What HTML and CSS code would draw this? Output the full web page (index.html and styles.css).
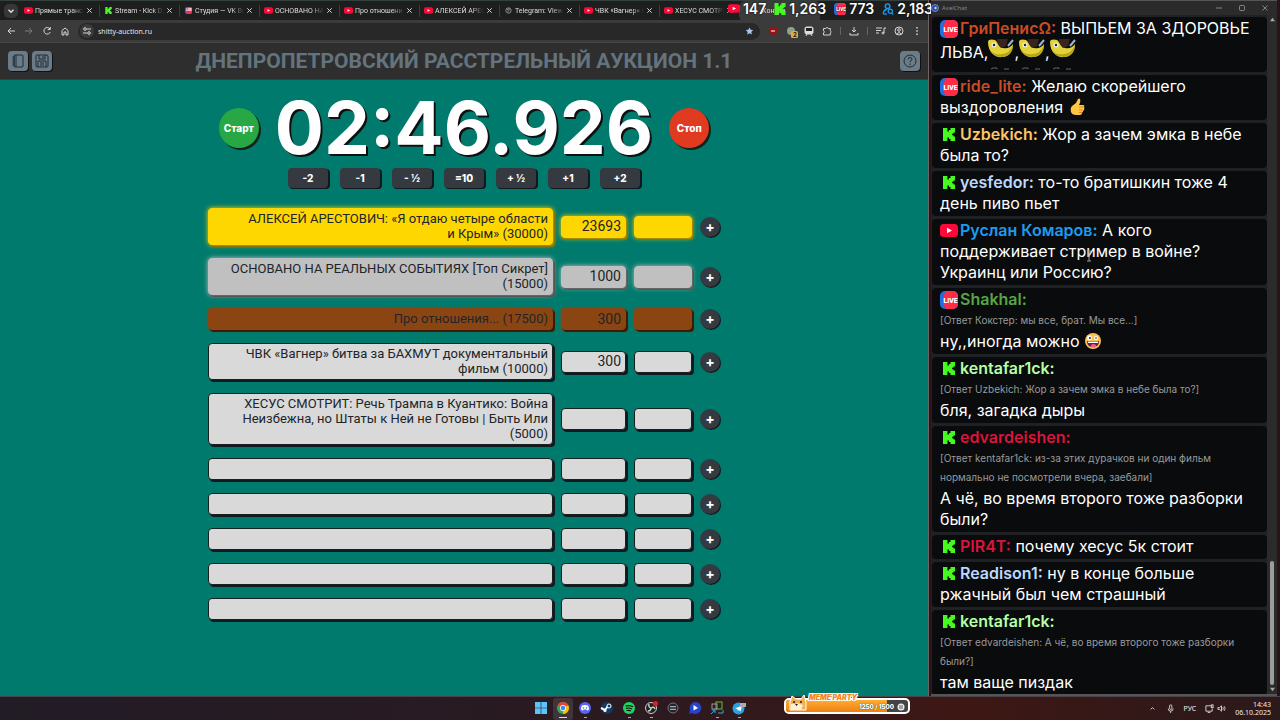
FILE: index.html
```html
<!DOCTYPE html>
<html lang="ru">
<head>
    <meta charset="UTF-8">
    <title>Аукцион</title>
    <link rel="stylesheet" href="styles.css">
</head>

<body>
    <!-- icons -->
    <svg class="sprite" aria-hidden="true">
        <symbol id="yt" viewBox="0 0 18 13"><rect width="18" height="13" rx="3.5" fill="#ff0838"/><path d="M7 3.8v5.4l5-2.7z" fill="#fff"/></symbol>
        <symbol id="kick" viewBox="0 0 12 13"><path d="M0 0h4.400v3.500H6V2h1.500V0H12v4.400h-1.500v1.300H9v1.600h1.500v1.300H12V13H7.500v-2H6V9.500H4.400V13H0z" fill="#43fb1c"/></symbol>
        <symbol id="live" viewBox="0 0 18 18"><rect width="18" height="18" rx="5" fill="#1f6fe0"/><path d="M6 0h7a5 5 0 0 1 5 5v8a5 5 0 0 1-5 5H6q-3-4-3-9t3-9z" fill="#ff2b47"/><text x="3.500" y="11.500" font-family="Roboto, sans-serif" font-size="6.800" font-weight="900" fill="#fff">LIVE</text></symbol>
        <symbol id="x" viewBox="0 0 8 8"><path d="M1.500 1.500l5 5m0-5l-5 5" fill="none" stroke="#ddd" stroke-width="1.100"/></symbol>
        <symbol id="globe" viewBox="0 0 10 10"><circle cx="5" cy="5" r="3.800" fill="none" stroke="#aaa"/><path d="M2 3l3 1-1 2 2 2M6 1l-1 2 3 2" fill="none" stroke="#aaa"/></symbol>
        <symbol id="emote" viewBox="0 0 26 31"><path d="M0 3C0 14 8 19 14 18c7 0 11-6 11-13-3 4-6 5-10 4C11 8 10 3 7 1 4 0 0 0 0 3z" fill="#e3d23a"/><path d="M1 9c3 6 8 7 13 6 5 0 9-4 11-9 0 8-5 12-11 12C8 18 3 15 1 9z" fill="#b8a41c"/><path d="M9 0h11l-2 7-5 2q-4-3-4-9z" fill="#39231f"/><circle cx="6" cy="6" r="2.500" fill="#eee"/><circle cx="6" cy="6" r="1.200" fill="#222"/><path d="M20 7l5-6" stroke="#9db6cc" stroke-width="2"/><path d="M3 30l2-1h4v1m7 0h5" fill="none" stroke="#666"/></symbol>
    </svg>

    <div class="screen">
        <div class="browser">
            <nav class="tabs">
                <button class="tab-list" aria-label="Поиск вкладок"><svg viewBox="0 0 8 8"><path d="M2 3l2 2 2-2" fill="none" stroke="#ddd" stroke-width="1.200"/></svg></button>
                <a class="tab" href="#"><svg class="fav"><use href="#yt"/></svg><span>Прямые трансл</span><svg class="x"><use href="#x"/></svg></a>
                <a class="tab" href="#"><svg class="fav"><use href="#kick"/></svg><span>Stream - Kick Da</span><svg class="x"><use href="#x"/></svg></a>
                <a class="tab" href="#"><svg class="fav"><use href="#live"/></svg><span>Студия — VK Ви</span><svg class="x"><use href="#x"/></svg></a>
                <a class="tab" href="#"><svg class="fav"><use href="#yt"/></svg><span>ОСНОВАНО НА</span><svg class="x"><use href="#x"/></svg></a>
                <a class="tab" href="#"><svg class="fav"><use href="#yt"/></svg><span>Про отношени</span><svg class="x"><use href="#x"/></svg></a>
                <a class="tab" href="#"><svg class="fav"><use href="#yt"/></svg><span>АЛЕКСЕЙ АРЕС</span><svg class="x"><use href="#x"/></svg></a>
                <a class="tab" href="#"><svg class="fav"><use href="#globe"/></svg><span>Telegram: View @</span><svg class="x"><use href="#x"/></svg></a>
                <a class="tab" href="#"><svg class="fav"><use href="#yt"/></svg><span>ЧВК «Вагнер» б</span><svg class="x"><use href="#x"/></svg></a>
                <a class="tab" href="#"><svg class="fav"><use href="#yt"/></svg><span>ХЕСУС СМОТРИ</span><svg class="x"><use href="#x"/></svg></a>
                <a class="tab active" href="#"><span>Конура</span></a>
            </nav>

            <div class="toolbar">
                <button aria-label="Назад"><svg viewBox="0 0 10 10"><path d="M9 5H2m3-3L2 5l3 3"/></svg></button>
                <button class="off" aria-label="Вперёд"><svg viewBox="0 0 10 10"><path d="M1 5h7M5 2l3 3-3 3"/></svg></button>
                <button aria-label="Обновить"><svg viewBox="0 0 10 10"><path d="M8 3a3.300 3.300 0 1 0 .3 3M8.300 1v2.500H5.700"/></svg></button>
                <button aria-label="Домой"><svg viewBox="0 0 10 10"><path d="M2 4.500L5 2l3 2.500V9H6V6H4v3H2z"/></svg></button>
                <label class="address">
                    <span class="site"><svg viewBox="0 0 10 10"><path d="M5 3h4M1 7h4"/><circle cx="3" cy="3" r="1.300"/><circle cx="7" cy="7" r="1.300"/></svg></span>
                    <input type="text" value="shitty-auction.ru" aria-label="Адрес">
                    <svg class="star" viewBox="0 0 10 10"><path d="M5 1l1.200 2.700 2.900.3L7 6l.6 3L5 7.500 2.400 9 3 6 .9 4l2.900-.3z"/></svg>
                </label>
                <button aria-label="uBlock"><svg viewBox="0 0 10 10"><path d="M5 1l4 1v3q0 3-4 4-4-1-4-4V2z" fill="#9c1010" stroke="none"/><path d="M3 5h4" stroke="#fff"/></svg></button>
                <button class="badge" aria-label="Расширение"><svg viewBox="0 0 12 12"><circle cx="5" cy="5" r="4" fill="#8fa08c" stroke="none"/><rect x="5" y="5" width="7" height="7" rx="1.500" fill="#f2a63a" stroke="none"/><text x="7" y="11" font-size="6" font-weight="700" font-family="Inter, sans-serif" fill="#222" stroke="none">2</text></svg></button>
                <button aria-label="Метро"><svg viewBox="0 0 10 10"><rect x="1" y="1" width="8" height="7" rx="1.500" fill="#ddd"/><rect x="2" y="2" width="6" height="3" fill="#222" stroke="none"/><path d="M2 10l1-2m5 2L7 8"/></svg></button>
                <button aria-label="Расширения"><svg viewBox="0 0 10 10"><path d="M1.500 2.500h2.300a1.300 1.300 0 0 1 2.500 0h2v2.300a1.300 1.300 0 0 1 0 2.200v2H1.500V7q2-1 0-2.200z"/></svg></button>
                <i></i>
                <button aria-label="Загрузки"><svg viewBox="0 0 10 10"><path d="M5 1v5M3 4l2 2 2-2M1 7v2h8V7"/></svg></button>
                <i></i>
                <button aria-label="Музыка"><svg viewBox="0 0 10 10"><path d="M0 2h6M0 4.500h5M0 7h3M8 7V2h2"/><circle cx="7" cy="7" r="1"/></svg></button>
                <button aria-label="Профиль"><svg viewBox="0 0 10 10"><circle cx="5" cy="5" r="4"/><circle cx="5" cy="4" r="1.300"/><path d="M2.500 8q2.500-3 5 0"/></svg></button>
                <button aria-label="Меню"><svg viewBox="0 0 10 10"><path d="M5 1v1.500M5 4.300v1.500M5 7.600v1.500" stroke-width="1.500"/></svg></button>
            </div>

            <header class="head">
                <div class="head-btns">
                    <button class="sq" aria-label="Журнал"><svg viewBox="0 0 14 14"><rect x="3" y="1" width="9" height="12" rx="1"/><path d="M5 1v12M1.500 3H4M1.500 5H4M1.500 7H4M1.500 9H4M1.500 11H4"/></svg></button>
                    <button class="sq" aria-label="Сохранить"><svg viewBox="0 0 14 14"><path d="M1 2q0-1 1-1h10l1 1v10q0 1-1 1H2q-1 0-1-1zM4 1v4h6V1M8 2v2M3 13V7h8v6M5 9h4M5 11h4"/></svg></button>
                </div>
                <h1>ДНЕПРОПЕТРОВСКИЙ РАССТРЕЛЬНЫЙ АУКЦИОН 1.1</h1>
                <div class="head-btns right">
                    <button class="sq" aria-label="Помощь"><svg viewBox="0 0 14 14"><circle cx="7" cy="7" r="6"/><path d="M5 5.500q0-2 2-2t2 1.800Q9 6.500 7 7.300v1M7 9.500V11"/></svg></button>
                </div>
            </header>

            <main class="auction">
                <div class="timer">
                    <button class="round start">Старт</button>
                    <time>02:46.926</time>
                    <button class="round stop">Стоп</button>
                </div>
                <div class="steps">
                    <button>-2</button>
                    <button>-1</button>
                    <button>- ½</button>
                    <button>=10</button>
                    <button>+ ½</button>
                    <button>+1</button>
                    <button>+2</button>
                </div>

                <div class="lots">
                    <div class="lot gold">
                        <textarea rows="2" aria-label="Лот 1">АЛЕКСЕЙ АРЕСТОВИЧ: «Я отдаю четыре области и&nbsp;Крым»&nbsp;(30000)</textarea>
                        <input class="sum" type="text" value="23693" aria-label="Сумма 1">
                        <input class="add" type="text" aria-label="Добавить 1">
                        <button aria-label="Плюс">+</button>
                    </div>
                    <div class="lot silver">
                        <textarea rows="2" aria-label="Лот 2">ОСНОВАНО НА РЕАЛЬНЫХ СОБЫТИЯХ [Топ Сикрет] (15000)</textarea>
                        <input class="sum" type="text" value="1000" aria-label="Сумма 2">
                        <input class="add" type="text" aria-label="Добавить 2">
                        <button aria-label="Плюс">+</button>
                    </div>
                    <div class="lot bronze">
                        <textarea rows="1" aria-label="Лот 3">Про отношения... (17500)</textarea>
                        <input class="sum" type="text" value="300" aria-label="Сумма 3">
                        <input class="add" type="text" aria-label="Добавить 3">
                        <button aria-label="Плюс">+</button>
                    </div>
                    <div class="lot">
                        <textarea rows="2" aria-label="Лот 4">ЧВК «Вагнер» битва за БАХМУТ документальный фильм&nbsp;(10000)</textarea>
                        <input class="sum" type="text" value="300" aria-label="Сумма 4">
                        <input class="add" type="text" aria-label="Добавить 4">
                        <button aria-label="Плюс">+</button>
                    </div>
                    <div class="lot">
                        <textarea rows="3" aria-label="Лот 5">ХЕСУС СМОТРИТ: Речь Трампа в Куантико: Война Неизбежна, но Штаты к Ней не Готовы | Быть Или (5000)</textarea>
                        <input class="sum" type="text" aria-label="Сумма 5">
                        <input class="add" type="text" aria-label="Добавить 5">
                        <button aria-label="Плюс">+</button>
                    </div>
                    <div class="lot">
                        <textarea rows="1" aria-label="Лот 6"></textarea>
                        <input class="sum" type="text" aria-label="Сумма 6">
                        <input class="add" type="text" aria-label="Добавить 6">
                        <button aria-label="Плюс">+</button>
                    </div>
                    <div class="lot">
                        <textarea rows="1" aria-label="Лот 7"></textarea>
                        <input class="sum" type="text" aria-label="Сумма 7">
                        <input class="add" type="text" aria-label="Добавить 7">
                        <button aria-label="Плюс">+</button>
                    </div>
                    <div class="lot">
                        <textarea rows="1" aria-label="Лот 8"></textarea>
                        <input class="sum" type="text" aria-label="Сумма 8">
                        <input class="add" type="text" aria-label="Добавить 8">
                        <button aria-label="Плюс">+</button>
                    </div>
                    <div class="lot">
                        <textarea rows="1" aria-label="Лот 9"></textarea>
                        <input class="sum" type="text" aria-label="Сумма 9">
                        <input class="add" type="text" aria-label="Добавить 9">
                        <button aria-label="Плюс">+</button>
                    </div>
                    <div class="lot">
                        <textarea rows="1" aria-label="Лот 10"></textarea>
                        <input class="sum" type="text" aria-label="Сумма 10">
                        <input class="add" type="text" aria-label="Добавить 10">
                        <button aria-label="Плюс">+</button>
                    </div>
                </div>
            </main>

            <!-- viewer counters over the tabs -->
            <div class="viewers">
                <span><svg class="v-yt"><use href="#yt"/></svg>147</span>
                <span><svg class="v-kick"><use href="#kick"/></svg>1,263</span>
                <span><svg class="v-live"><use href="#live"/></svg>773</span>
                <span><svg class="v-all" viewBox="0 0 12 13"><path d="M1 12q0-5 4-5M1 12h4" fill="none" stroke="#1b9af0" stroke-width="1.500"/><circle cx="5.500" cy="3.500" r="2.500" fill="none" stroke="#1b9af0" stroke-width="1.500"/><circle cx="8.500" cy="9" r="2.300" fill="none" stroke="#1b9af0" stroke-width="1.300"/><path d="M10 10.500l1.500 2" stroke="#1b9af0" stroke-width="1.300"/></svg>2,183</span>
            </div>
        </div>

        <aside class="chat">
            <div class="chat-title">
                <svg viewBox="0 0 8 8"><circle cx="4" cy="4" r="3.500" fill="#2544c4"/><circle cx="4.500" cy="4" r="1" fill="#fff"/></svg>
                <span>AxelChat</span>
                <button aria-label="Свернуть"><svg viewBox="0 0 8 8"><path d="M1 4h6"/></svg></button>
                <button aria-label="Развернуть"><svg viewBox="0 0 8 8"><rect x="1.500" y="1.500" width="5" height="5" rx="1"/></svg></button>
                <button aria-label="Закрыть"><svg viewBox="0 0 8 8"><path d="M1.500 1.500l5 5m0-5l-5 5"/></svg></button>
            </div>
            <div class="chat-body">
                <div class="messages">
                    <p class="msg"><svg class="live"><use href="#live"/></svg><b class="orange">ГриПенисΩ:</b> ВЫПЬЕМ ЗА ЗДОРОВЬЕ ЛЬВА,<svg class="emote"><use href="#emote"/></svg>,<svg class="emote"><use href="#emote"/></svg>,<svg class="emote"><use href="#emote"/></svg></p>
                    <p class="msg"><svg class="live"><use href="#live"/></svg><b class="orange">ride_lite:</b> Желаю скорейшего выздоровления <svg class="thumb" viewBox="0 0 16 18"><path d="M3 8l4-3 2-4q1-1 2 0 1 2-1 6h4q2 0 1 2 1 1 0 2 1 1-1 2 0 1-1 2 0 2-2 2H7q-4 0-5-3-1-4 1-6z" fill="#ffc544"/><path d="M10 9h5M10 12h4M10 14.500h3" stroke="#d98b1c"/></svg></p>
                    <p class="msg"><svg class="kick"><use href="#kick"/></svg><b class="sand">Uzbekich:</b> Жор а зачем эмка в небе была то?</p>
                    <p class="msg"><svg class="kick"><use href="#kick"/></svg><b class="ice">yesfedor:</b> то-то братишкин тоже 4 день пиво пьет</p>
                    <p class="msg"><svg class="yt"><use href="#yt"/></svg><b class="blue">Руслан Комаров:</b> А кого поддерживает стример в войне? Украинц или Россию?</p>
                    <p class="msg"><svg class="live"><use href="#live"/></svg><b class="green">Shakhal:</b><small>[Ответ Кокстер: мы все, брат. Мы все...]</small>ну,,иногда можно <svg class="smile" viewBox="0 0 18 18"><circle cx="9" cy="9" r="8" fill="#fbc25a"/><circle cx="5.500" cy="6" r="2.400" fill="#fff"/><circle cx="12" cy="6" r="2" fill="#fff"/><circle cx="6" cy="6" r="1" fill="#3a2020"/><circle cx="12" cy="6" r=".8" fill="#3a2020"/><path d="M3 9h12q0 6-6 6T3 9z" fill="#6b1e46"/><path d="M4 9.500h10v1.500H4z" fill="#fff"/><path d="M7 13q2-2 5 0v2q-3 1-5 0z" fill="#ee5b86"/></svg></p>
                    <p class="msg"><svg class="kick"><use href="#kick"/></svg><b class="mint">kentafar1ck:</b><small>[Ответ Uzbekich: Жор а зачем эмка в небе была то?]</small>бля, загадка дыры</p>
                    <p class="msg"><svg class="kick"><use href="#kick"/></svg><b class="red">edvardeishen:</b><small>[Ответ kentafar1ck: из-за этих дурачков ни один фильм нормально не посмотрели вчера, заебали]</small>А чё, во время второго тоже разборки были?</p>
                    <p class="msg"><svg class="kick"><use href="#kick"/></svg><b class="red">PIR4T:</b> почему хесус 5к стоит</p>
                    <p class="msg"><svg class="kick"><use href="#kick"/></svg><b class="ice">Readison1:</b> ну в конце больше ржачный был чем страшный</p>
                    <p class="msg"><svg class="kick"><use href="#kick"/></svg><b class="mint">kentafar1ck:</b><small>[Ответ edvardeishen: А чё, во время второго тоже разборки были?]</small>там ваще пиздак</p>
                </div>
                <div class="scroll">
                    <svg viewBox="0 0 6 6"><path d="M3 1l3 4H0z" fill="#aaa"/></svg>
                    <div class="thumb-bar"></div>
                    <svg viewBox="0 0 6 6"><path d="M3 5l3-4H0z" fill="#aaa"/></svg>
                </div>
            </div>
            <svg class="cursor" viewBox="0 0 6 12"><path d="M1 1h4M3 1v10M1 11h4" fill="none" stroke="#999"/></svg>
        </aside>
    </div>

    <footer class="taskbar">
        <div></div>
        <div class="apps">
            <button aria-label="Пуск"><svg viewBox="0 0 14 14"><path d="M1 1h5.700v5.700H1zM7.300 1H13v5.700H7.300zM1 7.300h5.700V13H1zM7.300 7.300H13V13H7.300z" fill="#5cc4fa"/></svg></button>
            <button class="run on" aria-label="Chrome"><svg viewBox="0 0 14 14"><circle cx="7" cy="7" r="6" fill="#34a853"/><path d="M7 7L1.800 4A6 6 0 0 1 12.200 4z" fill="#ea4335"/><path d="M7 7l5.200-3A6 6 0 0 1 7 13z" fill="#fbbc05"/><path d="M1.800 4h10.400L7 7z" fill="#ea4335"/><circle cx="7" cy="7" r="3" fill="#fff"/><circle cx="7" cy="7" r="2.300" fill="#4285f4"/></svg></button>
            <button class="run" aria-label="Discord"><svg viewBox="0 0 14 14"><circle cx="7" cy="7" r="6" fill="#5865f2"/><path d="M4 4.500q3-1 6 0 1 2 1 4-1 1-2 1l-.5-1h-3l-.5 1q-1 0-2-1 0-2 1-4z" fill="#fff"/><circle cx="5.500" cy="7" r=".8" fill="#5865f2"/><circle cx="8.500" cy="7" r=".8" fill="#5865f2"/></svg></button>
            <button aria-label="Steam"><svg viewBox="0 0 14 14"><circle cx="7" cy="7" r="6" fill="#133a63"/><path d="M1 7l4 2 3-4" stroke="#fff" stroke-width="2" fill="none"/><circle cx="9" cy="5" r="2" fill="#133a63" stroke="#fff"/><circle cx="5" cy="9.500" r="1.500" fill="#fff"/></svg></button>
            <button class="run" aria-label="Spotify"><svg viewBox="0 0 14 14"><circle cx="7" cy="7" r="6" fill="#1ed760"/><path d="M3.500 5q4-1 7.500.800M4 7.300q3-.8 6 .7M4.500 9.500q2.500-.6 4.500.6" fill="none" stroke="#111" stroke-width="1.200"/></svg></button>
            <button class="run" aria-label="OBS"><svg viewBox="0 0 14 14"><circle cx="7" cy="7" r="5.500" fill="#222" stroke="#ccc"/><path d="M7 7q-3-1-2-4M7 7q3-2 4 1M7 7q0 3-3 3" fill="none" stroke="#ccc" stroke-width="1.400"/><circle cx="11.500" cy="2.500" r="2.500" fill="#f01818"/></svg></button>
            <button aria-label="Приложение"><svg viewBox="0 0 14 14"><circle cx="7" cy="7" r="5" fill="#23232e" stroke="#777"/><path d="M4 5.500h6M4 8.500h6" stroke="#aaa"/><path d="M4 7h6" stroke="#667"/></svg></button>
            <button aria-label="AxelChat"><svg viewBox="0 0 14 14"><path d="M7 1a6 6 0 1 1-3 11l-3 1 1-4A6 6 0 0 1 7 1z" fill="#2845c9"/><path d="M5.500 4v5.500L10 7z" fill="#fff"/></svg></button>
            <button class="run" aria-label="Монитор"><svg viewBox="0 0 14 14"><rect x="6" y="1" width="6" height="7" fill="#1d241b" stroke="#77b43d"/><rect x="2" y="3" width="5" height="5" fill="none" stroke="#999"/><path d="M1 13l4-4M2 9h3v3M8 12h5V9" fill="none" stroke="#3ba5d8"/></svg></button>
            <button class="run" aria-label="Telegram"><svg viewBox="0 0 14 14"><circle cx="6.500" cy="7.500" r="6" fill="#2aa1df"/><path d="M3 7.500l7-3-1.300 6-2-1.500L5.500 10V8z" fill="#fff"/><rect x="8" y="2" width="6" height="4" fill="#aab"/></svg></button>
        </div>
        <div class="tray-side">
            <div class="meme">
                <div class="meme-bar"><div class="meme-fill"></div></div>
                <svg class="doge" viewBox="0 0 18 16"><path d="M1 15V7L3 1l4 3h5l3-4 2 7v8z" fill="#f2b155" stroke="#fff"/><path d="M2 9q4-1 6 1v5H2z" fill="#fff0d3"/><path d="M8 8l6 2-2 5H5q1-4 3-7z" fill="#fff0d3"/><path d="M4 7h2M11 7h2" stroke="#2b1a10" stroke-width="1.500"/><path d="M6 9h3l-1.500 2z" fill="#2b1a10"/></svg>
                <b class="meme-name">MEME PARTY</b>
                <span class="meme-num">1250 / 1500 <svg viewBox="0 0 8 8"><circle cx="4" cy="4" r="3.500" fill="#eee"/><path d="M2 3h4M2 5h4" stroke="#555"/></svg></span>
            </div>
            <div class="tray">
                <svg viewBox="0 0 10 10"><path d="M3 6l2-2 2 2"/></svg>
                <svg viewBox="0 0 10 10"><rect x="4" y="1" width="2.500" height="5" rx="1"/><path d="M2.500 5q0 3 2.700 3T8 5M5.200 8v2"/></svg>
                <span class="lang">РУС</span>
                <span class="pair"><svg viewBox="0 0 10 10"><path d="M7 2H1v6h7V5M3 9.500h3"/><rect x="7" y="1" width="2" height="3"/></svg><svg viewBox="0 0 10 10"><path d="M1 4h2l2-2v6L3 6H1zM6.500 3.500q1 1.500 0 3M8 2.500q2 2.500 0 5"/></svg></span>
                <time>14:43<br>06.10.2025</time>
            </div>
        </div>
    </footer>
</body>
</html>
```
FILE: styles.css
```css
* {
    box-sizing: border-box;
}

body {
    margin: 0;
    height: 100vh;
    display: flex;
    flex-direction: column;
    overflow: hidden;
    background: #2b1216;
    color: #fff;
    font-family: Inter, "Noto Sans", sans-serif;
}

button {
    padding: 0;
    border: 0;
    background: none;
    color: inherit;
    font-family: inherit;
}

svg {
    flex: none;
}

.sprite {
    display: none;
}

.screen {
    flex: 1;
    min-height: 0;
    display: grid;
    grid-template-columns: 1fr 348px;
    gap: 2px;
    padding-right: 1px;
}

/* browser */
.browser {
    position: relative;
    min-width: 0;
    display: flex;
    flex-direction: column;
    border-right: 1px solid #666;
    background: #007a6c;
}

.tabs {
    height: 20px;
    display: flex;
    align-items: center;
    padding-left: 4px;
    border-top: 1px solid #34403d;
    background: #1d1f1e;
}

.tab-list {
    width: 14px;
    height: 14px;
    margin-right: 2px;
    border-radius: 5px;
    background: #373737;
}

.tab-list svg {
    display: block;
    width: 10px;
    margin: 0 auto;
}

.tab {
    width: 80px;
    height: 12px;
    display: flex;
    align-items: center;
    gap: 2px;
    padding: 0 6px 0 4px;
    border-right: 1px solid #3c3c3c;
    color: #dedede;
    font: 7px/12px Roboto, sans-serif;
    text-decoration: none;
}

.tab span {
    flex: 1;
    overflow: hidden;
    white-space: nowrap;
    -webkit-mask-image: linear-gradient(90deg, #000 75%, transparent);
    mask-image: linear-gradient(90deg, #000 75%, transparent);
}

.tab .fav {
    width: 9px;
    height: 7px;
}

.tab .x {
    width: 7px;
    height: 7px;
}

.tab.active {
    height: 19px;
    padding-left: 22px;
    border: 0;
    border-radius: 5px 5px 0 0;
    background: #3b3b3b;
}

.toolbar {
    height: 23px;
    display: flex;
    align-items: center;
    gap: 8px;
    padding: 0 6px;
    border-bottom: 1px solid #474747;
    background: #3b3b3b;
}

.toolbar button {
    width: 10px;
    height: 10px;
}

.toolbar svg {
    display: block;
    width: 10px;
    height: 10px;
    fill: none;
    stroke: #d6d6d6;
}

.toolbar .badge svg {
    width: 12px;
    height: 12px;
}

.toolbar .off {
    opacity: .4;
}

.toolbar i {
    width: 1px;
    height: 8px;
    background: #666;
}

.address {
    flex: 1;
    height: 17px;
    display: flex;
    align-items: center;
    gap: 4px;
    padding: 0 6px 0 2px;
    border-radius: 9px;
    background: #282828;
}

.address .site {
    padding: 2px;
    border-radius: 50%;
    background: #3b3b3b;
}

.address input {
    flex: 1;
    padding: 0;
    border: 0;
    background: none;
    color: #e6e6e6;
    font: 7px "Noto Sans", sans-serif;
}

.address .star {
    width: 9px;
    fill: #a8c7fa;
    stroke: none;
}

.head {
    height: 37px;
    display: grid;
    grid-template-columns: 1fr auto 1fr;
    align-items: center;
    padding: 0 8px;
    border-bottom: 1px solid #1d4a44;
    background: #2e2e2e;
}

.head h1 {
    margin: 0;
    color: #64747f;
    font-family: Roboto, sans-serif;
    font-size: 21px;
    line-height: 24px;
}

.head-btns {
    display: flex;
    gap: 4px;
}

.head-btns.right {
    justify-content: flex-end;
}

.sq {
    width: 20px;
    height: 20px;
    display: grid;
    place-items: center;
    border-radius: 4px;
    background: #6c7c87;
    box-shadow: 1px 1px 0 #111;
}

.sq svg {
    width: 14px;
    height: 14px;
    fill: none;
    stroke: #1f2b38;
}

/* auction */
.auction {
    flex: 1;
    padding-top: 12px;
    background: #007a6c;
}

.timer {
    display: flex;
    justify-content: center;
    align-items: center;
    gap: 16px;
}

.timer time {
    font-size: 73px;
    font-weight: 700;
    line-height: 72px;
    text-shadow: 1px 1px 0 #111, 2px 2px 0 #111;
}

.round {
    width: 40px;
    height: 40px;
    border-radius: 50%;
    font-size: 10px;
    font-weight: 800;
    box-shadow: 1px 1px 0 #14221c, 2px 2px 0 #14221c;
}

.start {
    background: #28a745;
}

.stop {
    background: #e03a20;
}

.steps {
    display: flex;
    justify-content: center;
    gap: 12px;
    margin-top: 4px;
}

.steps button {
    width: 40px;
    height: 20px;
    border-radius: 4px;
    background: #343a40;
    font-size: 10px;
    font-weight: 800;
    box-shadow: 1px 1px 0 #14181c, 2px 1px 0 #14181c;
}

.lots {
    max-width: 512px;
    display: flex;
    flex-direction: column;
    gap: 13px;
    margin: 20px auto 0;
}

.lot {
    display: flex;
    align-items: center;
    gap: 8px;
}

.lot textarea,
.lot input {
    min-width: 0;
    margin: 0;
    padding: 2px 4px 3px;
    border: 1px solid #16211f;
    border-radius: 4px;
    background: #d9d9d9;
    color: #212529;
    font: 13px/15px Roboto, sans-serif;
    text-align: right;
    box-shadow: 1px 1px 0 #111a20, 2px 2px 0 #111a20;
}

.lot textarea {
    flex: 1;
    display: block;
    overflow: hidden;
    resize: none;
}

.lot input {
    height: 22px;
    font-size: 14px;
}

.lot .sum {
    width: 65px;
}

.lot .add {
    width: 58px;
}

.lot button {
    width: 20px;
    height: 20px;
    border-radius: 50%;
    background: #343a40;
    font-size: 14px;
    font-weight: 700;
    line-height: 20px;
    box-shadow: 1px 1px 0 #14181c;
}

.gold textarea,
.gold input {
    border-color: #ffd700;
    background: #ffd700;
    box-shadow: 1px 1px 0 #a38a00, 2px 2px 0 #8a7500, 0 0 5px #ffd700;
}

.silver textarea,
.silver input {
    border-color: #c0c0c0;
    background: #c0c0c0;
    box-shadow: 1px 1px 0 #666, 2px 2px 0 #555, 0 0 5px #c0c0c0;
}

.bronze textarea,
.bronze input {
    border-color: #8b4513;
    background: #8b4513;
    box-shadow: 1px 1px 0 #3d1c05, 2px 2px 0 #3d1c05, 0 0 3px #8b4513;
}

.viewers {
    position: absolute;
    top: 0;
    right: -5px;
    display: flex;
    gap: 8px;
    font-size: 14px;
    font-weight: 600;
    line-height: 17px;
    text-shadow: 0 0 2px #000;
}

.viewers span {
    display: flex;
    align-items: center;
    gap: 3px;
}

.viewers svg {
    width: 12px;
    height: 12px;
}

.viewers .v-yt {
    height: 9px;
}

/* chat */
.chat {
    position: relative;
    min-width: 0;
    min-height: 0;
    display: flex;
    flex-direction: column;
    margin-right: 2px;
    border-bottom: 2px solid #555;
    background: #202124;
}

.chat-title {
    flex: none;
    height: 15px;
    display: flex;
    align-items: center;
    gap: 3px;
    padding-right: 8px;
    border-top: 1px solid #555;
    background: #2b2b2b;
    color: #888;
    font: 6px "Noto Sans", sans-serif;
}

.chat-title span {
    flex: 1;
}

.chat-title svg {
    display: block;
    width: 8px;
    height: 8px;
    fill: none;
    stroke: #aaa;
    stroke-width: .7;
}

.chat-title button {
    margin-left: 12px;
}

.chat-body {
    flex: 1;
    min-height: 0;
    display: flex;
}

.messages {
    flex: 1;
    min-width: 0;
    display: flex;
    flex-direction: column;
    gap: 3px;
    padding: 2px 0 0 1px;
    overflow: hidden;
}

.msg {
    flex: none;
    margin: 0;
    padding: 1px 8px 2px;
    border-radius: 4px;
    background: #090b0d;
    font-size: 16px;
    line-height: 21px;
}

.msg svg {
    vertical-align: -3px;
}

.msg .live,
.msg .smile,
.msg .thumb {
    width: 18px;
    height: 18px;
    margin-right: 2px;
}

.msg .live {
    vertical-align: -4px;
}

.msg .yt {
    width: 18px;
    height: 13px;
    margin-right: 2px;
    vertical-align: -1px;
}

.msg .kick {
    width: 12px;
    height: 13px;
    margin: 0 5px 0 3px;
    vertical-align: -1px;
}

.msg .emote {
    width: 26px;
    height: 31px;
    vertical-align: -12px;
}

.msg b {
    font-weight: 600;
}

.msg small {
    display: block;
    margin: 1px 0;
    color: #9a9a9a;
    font-size: 10px;
    line-height: 19px;
}

.orange { color: #cc4b24; }
.sand { color: #ffc466; }
.ice { color: #bcd8ff; }
.blue { color: #1c9bf0; }
.green { color: #59a545; }
.mint { color: #b5ffa5; }
.red { color: #dc143c; }

.scroll {
    width: 10px;
    display: flex;
    flex-direction: column;
    align-items: center;
    padding: 2px 0;
    background: #2b2b2b;
}

.scroll svg {
    width: 5px;
    height: 5px;
}

.thumb-bar {
    width: 4px;
    height: 124px;
    margin: auto 0 2px;
    border-radius: 2px;
    background: #9c9c9c;
}

.cursor {
    position: absolute;
    top: 250px;
    left: 155px;
    width: 6px;
    height: 12px;
}

/* taskbar */
.taskbar {
    height: 24px;
    display: grid;
    grid-template-columns: 1fr auto 1fr;
    align-items: center;
    border-top: 1px solid #4a4347;
    background: linear-gradient(90deg, #221c26, #2b1a20 50%, #3e1714 75%, #2b191b);
}

.apps {
    display: flex;
    gap: 2px;
}

.apps button {
    width: 20px;
    height: 22px;
    display: flex;
    flex-direction: column;
    align-items: center;
    padding-top: 3px;
    border-radius: 3px;
}

.apps svg {
    width: 14px;
    height: 14px;
}

.apps .run::after {
    content: "";
    width: 3px;
    height: 1px;
    margin-top: 2px;
    background: #aaa;
}

.apps .on {
    background: #40333a;
}

.apps .on::after {
    width: 8px;
    background: #ddd;
}

.tray-side {
    display: flex;
    justify-content: space-between;
    align-items: center;
    padding: 0 9px 0 35px;
}

.meme {
    position: relative;
    width: 126px;
    height: 22px;
}

.meme-bar {
    height: 16px;
    border: 2px solid #fff;
    border-radius: 5px;
    background: #444;
}

.meme-fill {
    width: 83%;
    height: 100%;
    border-radius: 3px 0 0 3px;
    background: linear-gradient(#ffac33, #f08010);
}

.doge {
    position: absolute;
    top: -3px;
    left: 5px;
    width: 18px;
    height: 16px;
}

.meme-name {
    position: absolute;
    top: -4px;
    left: 25px;
    color: #f58220;
    font: italic 900 7px/8px Inter, sans-serif;
    text-shadow: 0 0 1px #fff, 1px 1px 0 #fff, -1px -1px 0 #fff, 1px -1px 0 #fff, -1px 1px 0 #fff;
    white-space: nowrap;
}

.meme-num {
    position: absolute;
    top: 5px;
    right: 5px;
    display: flex;
    gap: 3px;
    font: 900 6px/8px Inter, sans-serif;
    text-shadow: 0 0 1px #000;
}

.meme-num svg {
    width: 8px;
    height: 8px;
}

.tray {
    display: flex;
    align-items: center;
    gap: 9px;
    color: #eee;
    font: 7px/8px "Noto Sans", sans-serif;
}

.tray svg {
    width: 9px;
    height: 9px;
    fill: none;
    stroke: #ddd;
}

.pair {
    display: flex;
    gap: 3px;
}

.tray time {
    text-align: right;
}
```
